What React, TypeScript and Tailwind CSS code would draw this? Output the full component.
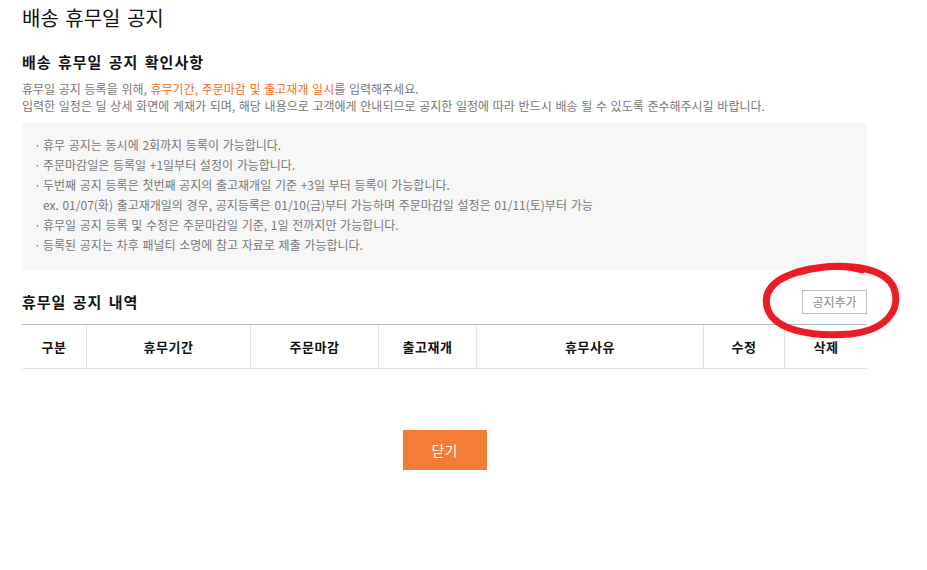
import React from 'react';

const NOTICES = [
  '휴무 공지는 동시에 2회까지 등록이 가능합니다.',
  '주문마감일은 등록일 +1일부터 설정이 가능합니다.',
  '두번째 공지 등록은 첫번째 공지의 출고재개일 기준 +3일 부터 등록이 가능합니다.',
  null,
  '휴무일 공지 등록 및 수정은 주문마감일 기준, 1일 전까지만 가능합니다.',
  '등록된 공지는 차후 패널티 소명에 참고 자료로 제출 가능합니다.',
];

const COLUMNS: { label: string; w: string }[] = [
  { label: '구분', w: 'w-[65px]' },
  { label: '휴무기간', w: 'w-[164px]' },
  { label: '주문마감', w: 'w-[128px]' },
  { label: '출고재개', w: 'w-[98px]' },
  { label: '휴무사유', w: 'w-[227px]' },
  { label: '수정', w: 'w-[81px]' },
  { label: '삭제', w: 'w-[82px]' },
];

export default function App() {
  return (
    <div
      className="relative w-[927px] h-[570px] bg-white overflow-hidden"
      style={{ fontFamily: '"Noto Sans CJK KR", "Liberation Sans", sans-serif' }}
    >
      <div className="w-[845px] ml-[22px] pt-[4px]">
        <h1 className="text-[20px] leading-[28px] font-normal text-[#111] [word-spacing:2px]">배송 휴무일 공지</h1>

        <h2 className="mt-[20px] text-[15px] leading-[20px] font-bold text-[#111] tracking-[1px] [word-spacing:2px]">
          배송 휴무일 공지 확인사항
        </h2>
        <div className="mt-[8px] text-[12px] leading-[17px] text-[#777] [word-spacing:1px]">
          <p>
            휴무일 공지 등록을 위해,{' '}
            <span className="text-[#f26f21]">휴무기간, 주문마감 및 출고재개 일시</span>를 입력해주세요.
          </p>
          <p>
            입력한 일정은 딜 상세 화면에 게재가 되며, 해당 내용으로 고객에게 안내되므로 공지한 일정에 따라 반드시
            배송 될 수 있도록 준수해주시길 바랍니다.
          </p>
        </div>

        <div className="mt-[9px] bg-[#f7f7f7] pl-[12px] pt-[12px] pb-[15px] text-[12px] leading-[20px] text-[#777] [word-spacing:1px]">
          {NOTICES.map((n, i) =>
            n === null ? (
              <p key={i} className="pl-[9px]">
                ex. 01/07(화) 출고재개일의 경우, 공지등록은 01/10(금)부터 가능하며 주문마감일 설정은 01/11(토)부터 가능
              </p>
            ) : (
              <p key={i}>
                <span className="inline-block w-[9px]">·</span>
                {n}
              </p>
            ),
          )}
        </div>

        <div className="mt-[20px] flex items-center justify-between">
          <h2 className="text-[15px] leading-[20px] font-bold text-[#111] tracking-[1px] [word-spacing:2px]">
            휴무일 공지 내역
          </h2>
          <button className="w-[65px] h-[24px] border border-[#bbbec4] bg-white text-[12px] text-[#888]">
            공지추가
          </button>
        </div>

        <div className="mt-[10px] flex border-t border-[#b3bac5] border-b border-b-[#e4e4e4]">
          {COLUMNS.map((c, i) => (
            <div
              key={c.label}
              className={`${c.w} h-[43px] flex items-center justify-center text-[13px] font-bold tracking-[0.5px] text-[#111] ${
                i < COLUMNS.length - 1 ? 'border-r border-[#e4e4e4]' : ''
              }`}
            >
              {c.label}
            </div>
          ))}
        </div>

        <div className="mt-[61px] flex justify-center">
          <button className="w-[84px] h-[40px] bg-[#f47d36] text-white text-[14px]">닫기</button>
        </div>
      </div>

      {/* hand-drawn highlight around the add button */}
      <svg className="absolute left-0 top-0 pointer-events-none" width="927" height="570">
        <path
          d="M 800 272 C 830 263, 880 263, 893 286 C 902 306, 890 330, 850 334 C 810 337, 776 330, 768 310 C 761 290, 776 276, 810 269 C 830 265, 850 266, 862 270"
          fill="none"
          stroke="#ec1c24"
          strokeWidth="7"
          strokeLinecap="round"
        />
      </svg>
    </div>
  );
}
